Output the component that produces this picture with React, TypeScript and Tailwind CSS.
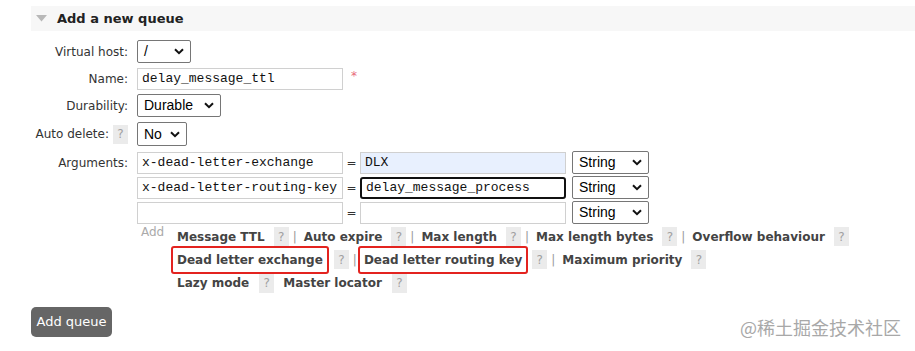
import React from "react";

const Chevron = () => (
  <svg width="10" height="7" viewBox="0 0 10 7" className="shrink-0">
    <path d="M1 1.2 L5 5.2 L9 1.2" fill="none" stroke="#111" strokeWidth="2" />
  </svg>
);

const Select = ({ value, w, h = 23 }: { value: string; w: number; h?: number }) => (
  <div
    className="flex items-center justify-between border border-[#767676] rounded-[2px] bg-white pl-[6px] pr-[6px] text-[14px] text-black"
    style={{ width: w, height: h, fontFamily: '"Liberation Sans", Arial, sans-serif' }}
  >
    <span>{value}</span>
    <Chevron />
  </div>
);

const Help = () => (
  <span className="inline-flex items-center justify-center w-[15px] h-[19px] bg-[#ebebeb] text-[#a0a0a0] text-[12px] font-normal">
    ?
  </span>
);

const mono = { fontFamily: '"Liberation Mono", "Courier New", monospace' };

const TextBox = ({ value, w = 206, className = "" }: { value?: string; w?: number; className?: string }) => (
  <div
    className={"h-[22px] flex items-center pl-[4px] text-[13px] text-[#111] " + className}
    style={{ width: w, ...mono }}
  >
    {value}
  </div>
);

const Link = ({ children, boxed }: { children: React.ReactNode; boxed?: boolean }) => (
  <span className="relative font-bold text-[#444]">
    {children}
    {boxed && (
      <span className="absolute -left-[6px] -right-[6px] -top-[5px] -bottom-[5px] border-2 border-[#e3231f] rounded-[3px]" />
    )}
  </span>
);

const Sep = () => <span className="text-[#999] ml-[4px] mr-[7px]">|</span>;

export default function App() {
  const font = { fontFamily: '"DejaVu Sans", Verdana, sans-serif' };
  return (
    <div className="relative w-[915px] h-[351px] bg-white overflow-hidden text-[12px] text-[#333]" style={font}>
      <div className="pl-[31px] pt-[6px]">
        <div className="h-[25px] bg-[#f7f7f7] flex items-center pl-[5px]">
          <svg width="11" height="7" viewBox="0 0 11 7">
            <path d="M0 0 L11 0 L5.5 6.5 Z" fill="#b8b8b8" />
          </svg>
          <span className="ml-[10px] font-bold text-[13px] text-[#222]">Add a new queue</span>
        </div>

        {/* Virtual host */}
        <div className="flex items-center mt-[9px] h-[23px]">
          <div className="w-[97px] text-right">Virtual host:</div>
          <div className="ml-[9px]">
            <Select value="/" w={54} />
          </div>
        </div>

        {/* Name */}
        <div className="flex items-center mt-[5px] h-[22px]">
          <div className="w-[97px] text-right">Name:</div>
          <div className="ml-[9px] flex items-center">
            <TextBox value="delay_message_ttl" className="border border-[#d0d0d0]" />
            <span className="ml-[8px] text-[#e86a7a] text-[12px] -mt-[6px]">*</span>
          </div>
        </div>

        {/* Durability */}
        <div className="flex items-center mt-[4px] h-[23px]">
          <div className="w-[97px] text-right">Durability:</div>
          <div className="ml-[9px]">
            <Select value="Durable" w={84} />
          </div>
        </div>

        {/* Auto delete */}
        <div className="flex items-center mt-[5px] h-[24px]">
          <div className="w-[97px] flex items-center justify-end gap-[4px]">
            <span>Auto delete:</span>
            <Help />
          </div>
          <div className="ml-[9px]">
            <Select value="No" w={50} h={24} />
          </div>
        </div>

        {/* Arguments */}
        <div className="flex mt-[5px]">
          <div className="w-[97px] text-right pt-[3px]">Arguments:</div>
          <div className="ml-[9px] flex flex-col gap-[2px]">
            <div className="flex items-center">
              <TextBox value="x-dead-letter-exchange" className="border border-[#d0d0d0]" />
              <span className="w-[17px] text-center text-[12px]">=</span>
              <TextBox value="DLX" className="border border-[#d0d0d0] bg-[#e8f0fe]" />
              <div className="ml-[6px]">
                <Select value="String" w={77} />
              </div>
            </div>
            <div className="flex items-center">
              <TextBox value="x-dead-letter-routing-key" className="border border-[#d0d0d0]" />
              <span className="w-[17px] text-center text-[12px]">=</span>
              <TextBox value="delay_message_process" className="border-2 border-[#111] rounded-[3px] pl-[3px]" />
              <div className="ml-[6px]">
                <Select value="String" w={77} />
              </div>
            </div>
            <div className="flex items-center">
              <TextBox className="border border-[#d0d0d0]" />
              <span className="w-[17px] text-center text-[12px]">=</span>
              <TextBox className="border border-[#d0d0d0]" />
              <div className="ml-[6px]">
                <Select value="String" w={77} />
              </div>
            </div>
          </div>
        </div>

        {/* Add links */}
        <div className="flex mt-[1px] ml-[110px]">
          <div className="w-[36px] text-[#aaa] leading-[22px] -mt-[4px]">Add</div>
          <div className="flex flex-col text-[12px]">
            <div className="flex items-center h-[23px]">
              <Link>Message TTL</Link>
              <span className="ml-[9px]"><Help /></span>
              <Sep />
              <Link>Auto expire</Link>
              <span className="ml-[9px]"><Help /></span>
              <Sep />
              <Link>Max length</Link>
              <span className="ml-[9px]"><Help /></span>
              <Sep />
              <Link>Max length bytes</Link>
              <span className="ml-[9px]"><Help /></span>
              <Sep />
              <Link>Overflow behaviour</Link>
              <span className="ml-[9px]"><Help /></span>
            </div>
            <div className="flex items-center h-[23px]">
              <Link boxed>Dead letter exchange</Link>
              <span className="ml-[11px]"><Help /></span>
              <Sep />
              <Link boxed>Dead letter routing key</Link>
              <span className="ml-[10px]"><Help /></span>
              <Sep />
              <Link>Maximum priority</Link>
              <span className="ml-[9px]"><Help /></span>
            </div>
            <div className="flex items-center h-[24px]">
              <Link>Lazy mode</Link>
              <span className="ml-[10px]"><Help /></span>
              <span className="ml-[9px]"><Link>Master locator</Link></span>
              <span className="ml-[10px]"><Help /></span>
            </div>
          </div>
        </div>

        <button className="mt-[12px] w-[81px] h-[30px] bg-[#666] rounded-[5px] text-white text-[13px]" style={font}>
          Add queue
        </button>
      </div>

      <div
        className="absolute right-[14px] bottom-[12px] text-[18px] leading-[24px] text-[#a8a8a8]"
        style={{ fontFamily: '"Noto Sans CJK SC", "Noto Sans", sans-serif' }}
      >
        @稀土掘金技术社区
      </div>
    </div>
  );
}
